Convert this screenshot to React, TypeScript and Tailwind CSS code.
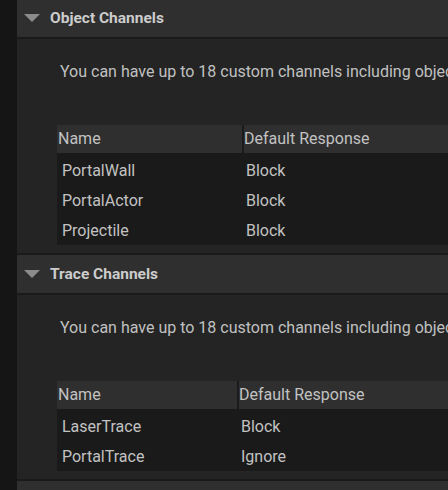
import React from 'react'

type Channel = { name: string; response: string }

const sections: { title: string; nameWidth: string; channels: Channel[] }[] = [
  {
    title: 'Object Channels',
    nameWidth: 'w-[185px]',
    channels: [
      { name: 'PortalWall', response: 'Block' },
      { name: 'PortalActor', response: 'Block' },
      { name: 'Projectile', response: 'Block' },
    ],
  },
  {
    title: 'Trace Channels',
    nameWidth: 'w-[180px]',
    channels: [
      { name: 'LaserTrace', response: 'Block' },
      { name: 'PortalTrace', response: 'Ignore' },
    ],
  },
]

function Caret() {
  return (
    <svg width="16" height="8" viewBox="0 0 16 8" className="shrink-0">
      <path d="M0 0 L16 0 L8 8 Z" fill="#8c8c8c" />
    </svg>
  )
}

function SectionHeader({ title, first }: { title: string; first?: boolean }) {
  return (
    <div
      className={`flex shrink-0 items-center gap-[10px] border-b-2 border-[#1a1a1a] bg-[#2f2f2f] pl-[7px] ${
        first ? 'h-[40px]' : 'h-[42px] border-t-2'
      }`}
    >
      <Caret />
      <span className="pt-px text-[15.5px] font-bold text-[#cccccc]">{title}</span>
    </div>
  )
}

function ChannelTable({ nameWidth, channels }: { nameWidth: string; channels: Channel[] }) {
  return (
    <div className="flex flex-col">
      <div className="flex h-[30px] items-center border-b-2 border-[#1a1a1a] bg-[#2f2f2f] text-[16px] text-[#c2c2c2]">
        <div className={`${nameWidth} shrink-0 pl-[1px]`}>Name</div>
        <div className="flex h-full flex-1 items-center whitespace-nowrap border-l-2 border-[#1b1b1b]">
          Default Response
        </div>
      </div>
      {channels.map((c) => (
        <div
          key={c.name}
          className="flex h-[30px] items-center bg-[#1a1a1a] pt-[2px] text-[16px] text-[#c2c2c2]"
        >
          <div className={`${nameWidth} shrink-0 pl-[5px]`}>{c.name}</div>
          <div className="flex-1 whitespace-nowrap pl-[4px]">{c.response}</div>
        </div>
      ))}
    </div>
  )
}

export default function App() {
  return (
    <div
      className="flex h-[490px] w-[448px] overflow-hidden bg-[#242424]"
      style={{ fontFamily: 'Roboto, "Noto Sans", sans-serif' }}
    >
      <div className="w-[17px] shrink-0 bg-[#151515]" />
      <div className="-mt-px flex min-w-0 flex-1 flex-col">
        {sections.map((s, i) => (
          <div key={s.title} className="flex flex-col">
            <SectionHeader title={s.title} first={i === 0} />
            <div className="flex flex-col pb-[8px] pl-[40px] pt-[21px]">
              <p className="ml-[3px] whitespace-nowrap text-[16px] leading-[24px] text-[#c0c0c0]">
                You can have up to 18 custom channels including object and trace channels.
              </p>
              <div className="mt-[41px]">
                <ChannelTable nameWidth={s.nameWidth} channels={s.channels} />
              </div>
            </div>
          </div>
        ))}
        <div className="h-[40px] shrink-0 border-t-2 border-[#1a1a1a] bg-[#2f2f2f]" />
      </div>
    </div>
  )
}
